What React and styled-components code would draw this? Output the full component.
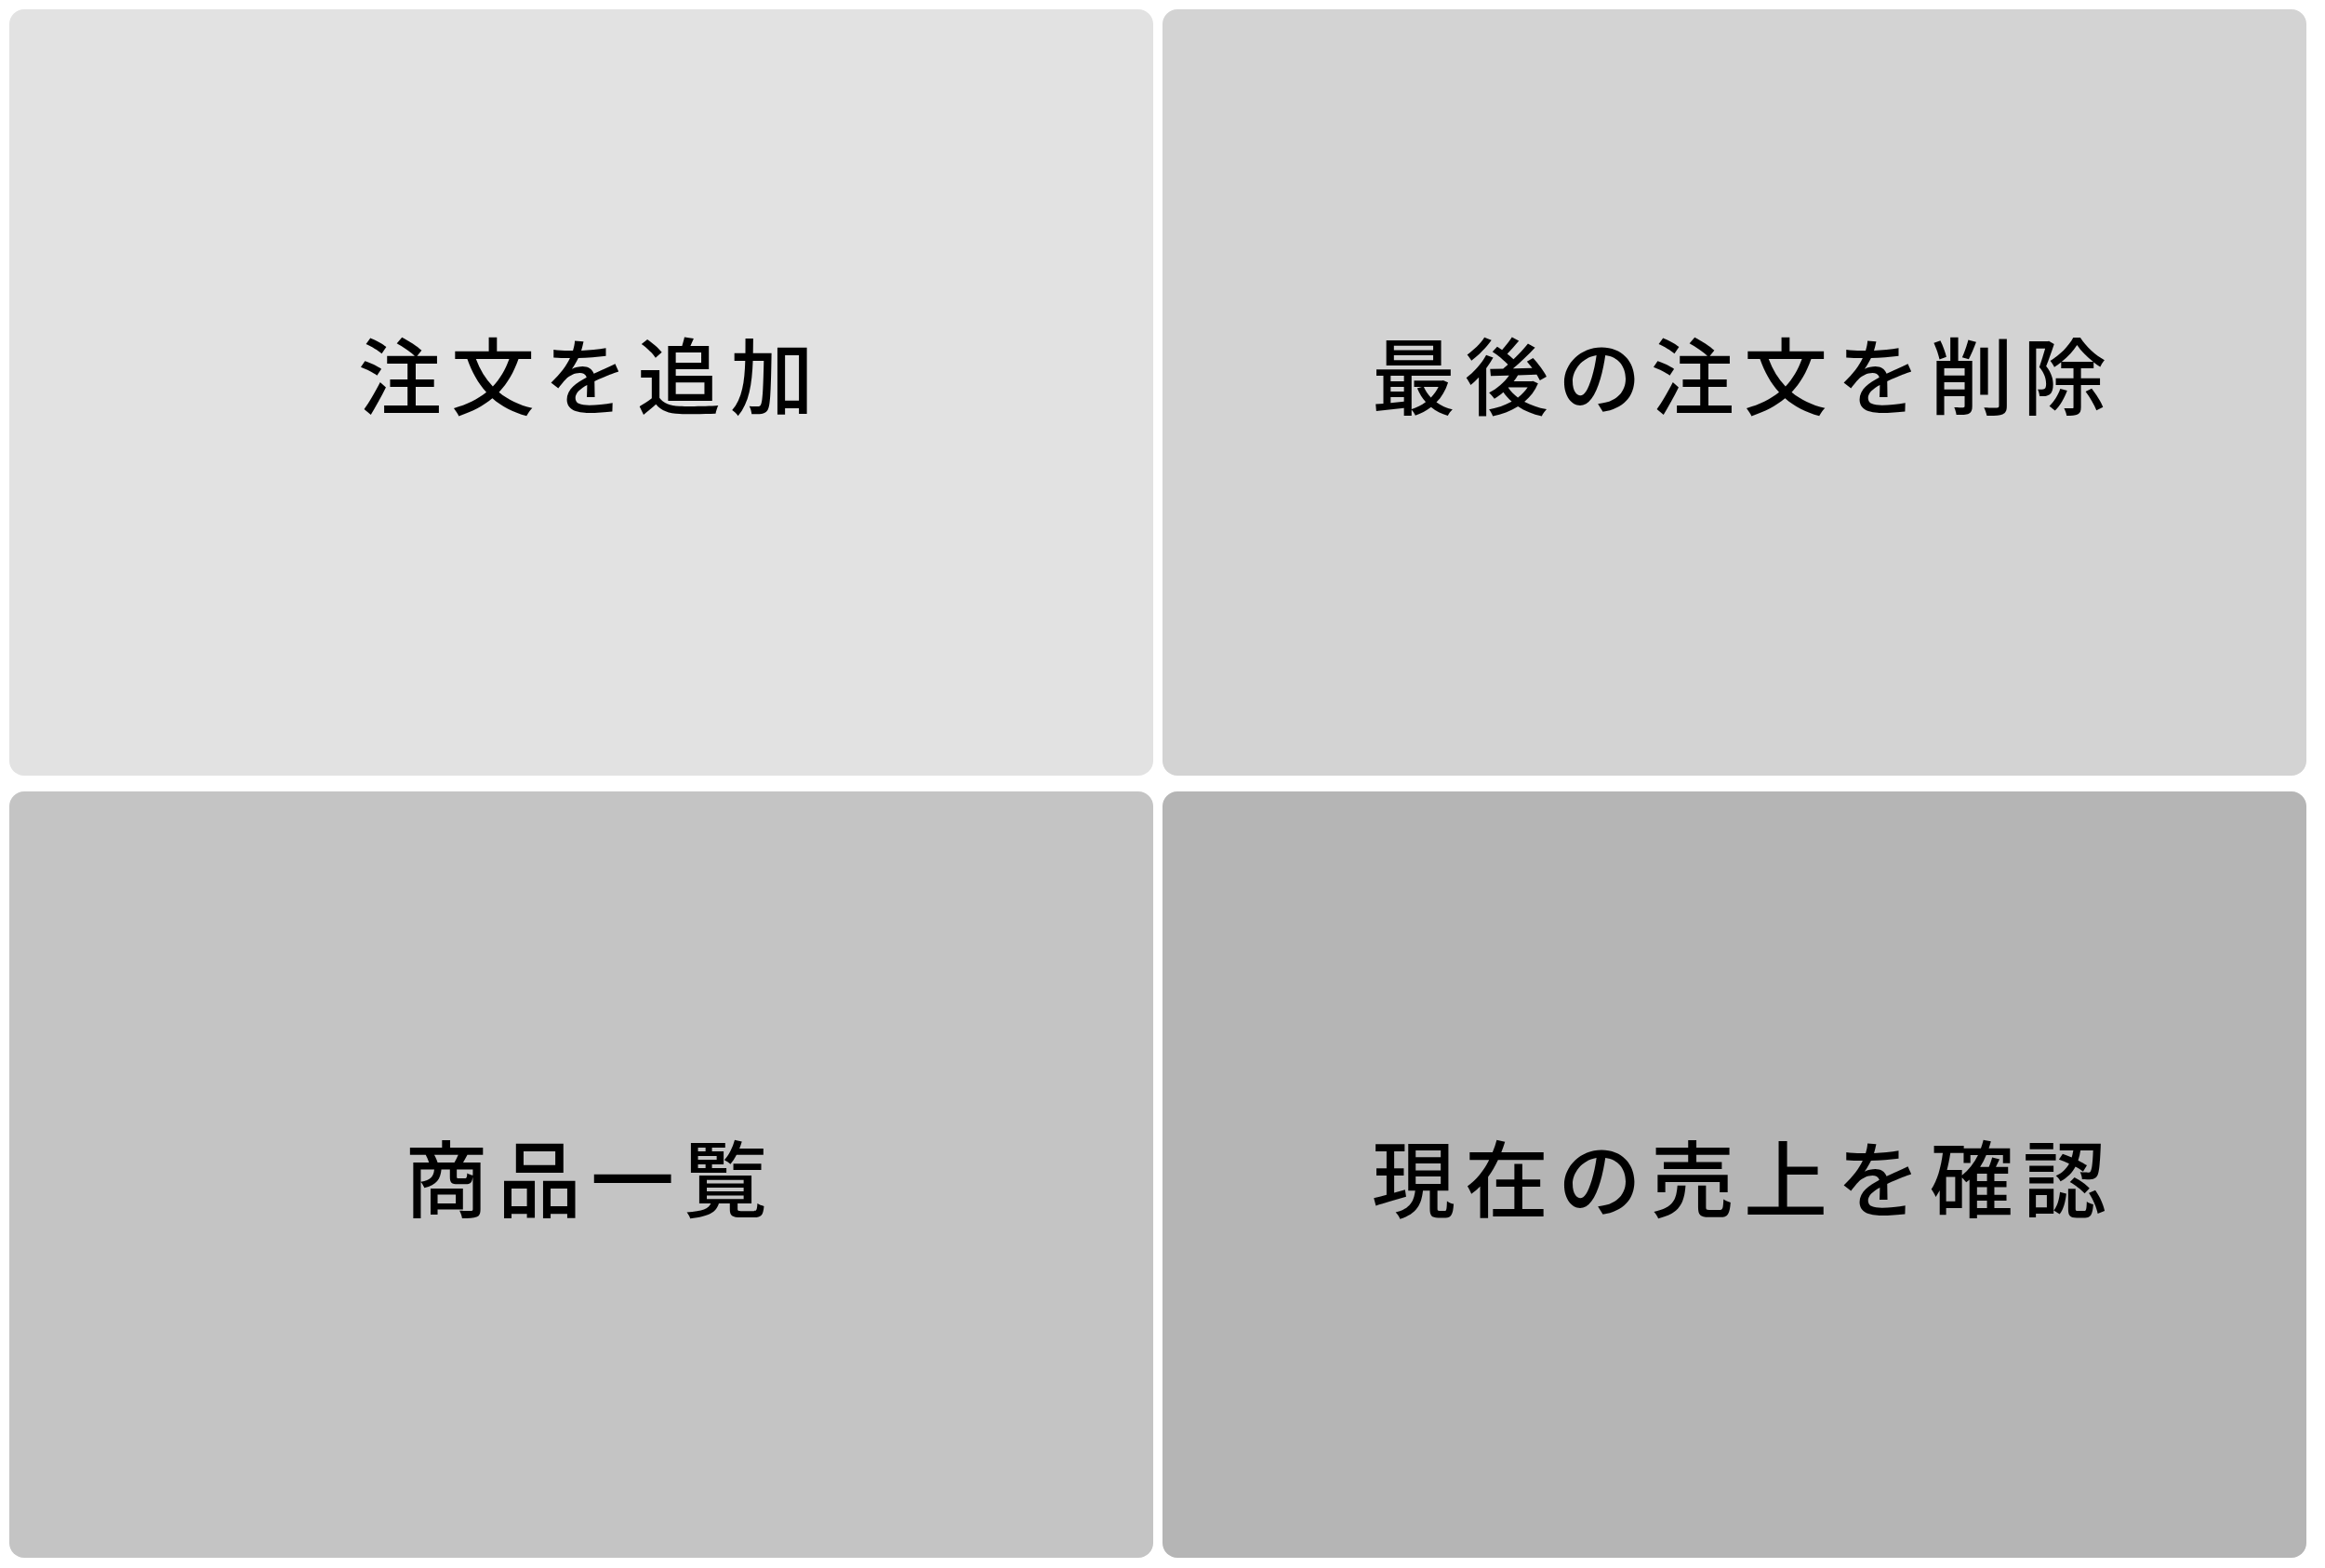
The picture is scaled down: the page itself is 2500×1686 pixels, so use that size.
import React from "react";
import styled, { createGlobalStyle } from "styled-components";

const Global = createGlobalStyle`
  html, body { margin: 0; padding: 0; background: #ffffff; }
  body { font-family: "Noto Sans CJK JP", "Noto Sans", sans-serif; }
`;

const Grid = styled.div`
  box-sizing: border-box;
  width: 2500px;
  height: 1686px;
  padding: 10px 20px 11px 10px;
  display: grid;
  grid-template-columns: 1fr 1fr;
  grid-template-rows: 1fr 1fr;
  column-gap: 10px;
  row-gap: 17px;
`;

const Tile = styled.button`
  border: none;
  margin: 0;
  padding: 0 0 ${(p) => p.$lift}px 20px;
  border-radius: 16px;
  background: ${(p) => p.$bg};
  color: #000000;
  font-family: "Noto Sans CJK JP", sans-serif;
  font-size: 90px;
  font-weight: 500;
  letter-spacing: 10px;
  display: flex;
  align-items: center;
  justify-content: center;
  cursor: pointer;
`;

const items = [
  { label: "注文を追加", bg: "#e2e2e2", lift: 44 },
  { label: "最後の注文を削除", bg: "#d3d3d3", lift: 44 },
  { label: "商品一覧", bg: "#c4c4c4", lift: 0 },
  { label: "現在の売上を確認", bg: "#b5b5b5", lift: 0 },
];

export default function App() {
  return (
    <>
      <Global />
      <Grid>
        {items.map((it) => (
          <Tile key={it.label} $bg={it.bg} $lift={it.lift}>
            {it.label}
          </Tile>
        ))}
      </Grid>
    </>
  );
}
